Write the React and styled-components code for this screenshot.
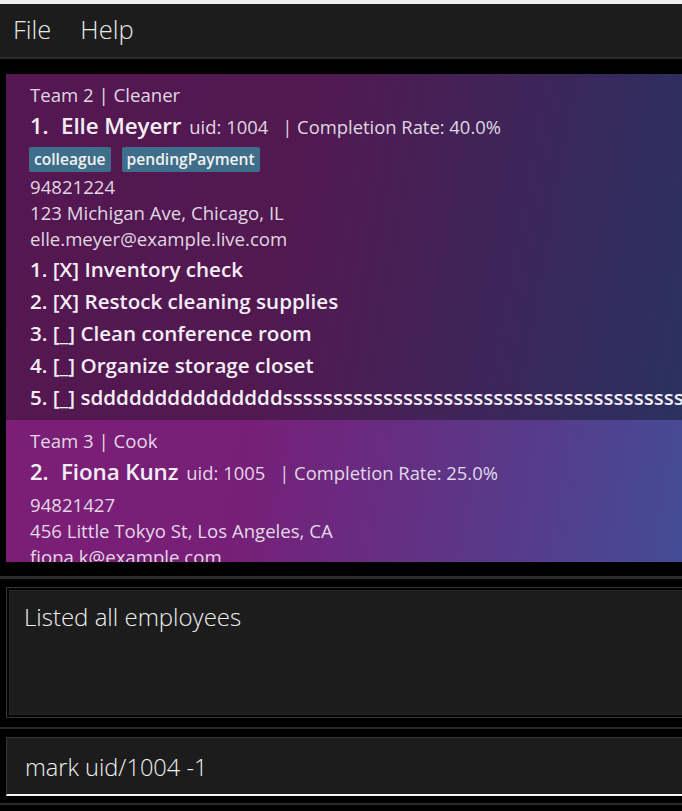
import React from "react";
import styled, { createGlobalStyle } from "styled-components";

const GlobalStyle = createGlobalStyle`
  html, body { margin: 0; padding: 0; background: #000; overflow: hidden; }
  #root { width: 100vw; height: 100vh; }
  * { box-sizing: border-box; }
`;

const Window = styled.div`
  width: 100%;
  height: 811px;
  background: #000;
  display: flex;
  flex-direction: column;
  overflow: hidden;
  font-family: "Open Sans", "Noto Sans", sans-serif;
`;

const TopStrip = styled.div`
  height: 4px;
  background: #f0f0f0;
  flex: none;
`;

const MenuBar = styled.div`
  height: 55px;
  flex: none;
  background: #1c1c1c;
  border-bottom: 2px solid #2b2b2b;
  display: flex;
  align-items: center;
  gap: 29px;
  padding-left: 13px;
  padding-bottom: 3px;
`;

const MenuItem = styled.span`
  font-size: 25.5px;
  font-weight: 300;
  color: #e8e8e8;
`;

const ListPane = styled.div`
  flex: none;
  height: 520px;
  padding: 15px 0 14px 6px;
  border-bottom: 3px solid #2c2c2c;
`;

const ListViewport = styled.div`
  height: 488px;
  overflow: hidden;
`;

const Card = styled.div`
  background: ${(p) => p.$bg};
  padding: 8px 0 7px 24px;
  color: rgba(240, 234, 244, 0.92);
  white-space: nowrap;
  overflow: hidden;
`;

const SmallLine = styled.div`
  font-size: 18.6px;
  line-height: 26px;
  height: 26px;
`;

const NameRow = styled.div`
  margin-top: 2px;
  height: 30px;
  display: flex;
  align-items: baseline;
  line-height: 30px;
`;

const Index = styled.span`
  font-size: 22px;
  font-weight: 600;
  color: #f3eef6;
  width: 31px;
`;

const Name = styled.span`
  font-size: 22.4px;
  font-weight: 600;
  color: #f3eef6;
  letter-spacing: -0.1px;
  margin-right: 8px;
`;

const Meta = styled.span`
  font-size: 18.4px;
  margin-right: ${(p) => p.$gap || 0}px;
`;

const TagRow = styled.div`
  margin-top: 7px;
  margin-bottom: -2px;
  height: 25px;
  display: flex;
  gap: 11px;
  margin-left: -1px;
`;

const Tag = styled.span`
  background: #3f6e8a;
  color: #f2f2f2;
  font-size: 15.6px;
  font-weight: 600;
  line-height: 25px;
  padding: 0 5px;
  border-radius: 2px;
`;

const Details = styled.div`
  margin-top: ${(p) => (p.$afterTags ? 4 : 6)}px;
`;

const Tasks = styled.div`
  margin-top: 1px;
`;

const TaskLine = styled.div`
  font-size: 20.6px;
  font-weight: 600;
  line-height: 32px;
  height: 32px;
  color: #f3eef6;
`;

const ResultSection = styled.div`
  flex: none;
  padding: 8px 0 9px 6px;
  border-bottom: 2px solid #2a2a2a;
`;

const ResultOuter = styled.div`
  border: 1px solid #353535;
  border-right: none;
  padding: 2px 0 2px 2px;
  background: #050505;
`;

const ResultInner = styled.div`
  height: 125px;
  background: #1c1c1c;
  border: 1px solid #262626;
  border-right: none;
  padding: 11px 0 0 14px;
  font-size: 24px;
  font-weight: 300;
  color: #f0f0f0;
  line-height: 30px;
`;

const CommandSection = styled.div`
  flex: none;
  padding: 8px 0 7px 6px;
  border-bottom: 2px solid #2a2a2a;
`;

const CommandBox = styled.div`
  height: 59px;
  background: #1c1c1c;
  border-top: 1px solid #363636;
  border-left: 1px solid #363636;
  border-bottom: 2px solid #f5f5f5;
  padding: 14px 0 0 18px;
  font-size: 23.6px;
  font-weight: 300;
  color: #f0f0f0;
  line-height: 30px;
`;

const employees = [
  {
    team: "Team 2 | Cleaner",
    name: "Elle Meyerr",
    uid: "1004",
    rate: "40.0%",
    tags: ["colleague", "pendingPayment"],
    phone: "94821224",
    address: "123 Michigan Ave, Chicago, IL",
    email: "elle.meyer@example.live.com",
    tasks: [
      "1. [X] Inventory check",
      "2. [X] Restock cleaning supplies",
      "3. [_] Clean conference room",
      "4. [_] Organize storage closet",
      "5. [_] s" + "d".repeat(15) + "s".repeat(60),
    ],
    bg: "linear-gradient(100deg, #551751 0%, #521951 42%, #2a3161 100%)",
  },
  {
    team: "Team 3 | Cook",
    name: "Fiona Kunz",
    uid: "1005",
    rate: "25.0%",
    tags: [],
    phone: "94821427",
    address: "456 Little Tokyo St, Los Angeles, CA",
    email: "fiona.k@example.com",
    tasks: [],
    bg: "linear-gradient(100deg, #7c1e76 0%, #771f78 35%, #434c96 100%)",
  },
];

function EmployeeCard({ e, index }) {
  const hasTags = e.tags.length > 0;
  return (
    <Card $bg={e.bg}>
      <SmallLine>{e.team}</SmallLine>
      <NameRow>
        <Index>{index}.</Index>
        <Name>{e.name}</Name>
        <Meta $gap={14}>uid: {e.uid}</Meta>
        <Meta>| Completion Rate: {e.rate}</Meta>
      </NameRow>
      {hasTags && (
        <TagRow>
          {e.tags.map((t) => (
            <Tag key={t}>{t}</Tag>
          ))}
        </TagRow>
      )}
      <Details $afterTags={hasTags}>
        <SmallLine>{e.phone}</SmallLine>
        <SmallLine>{e.address}</SmallLine>
        <SmallLine>{e.email}</SmallLine>
      </Details>
      {e.tasks.length > 0 && (
        <Tasks>
          {e.tasks.map((t) => (
            <TaskLine key={t}>{t}</TaskLine>
          ))}
        </Tasks>
      )}
    </Card>
  );
}

export default function App() {
  return (
    <>
      <GlobalStyle />
      <Window>
        <TopStrip />
        <MenuBar>
          <MenuItem>File</MenuItem>
          <MenuItem>Help</MenuItem>
        </MenuBar>
        <ListPane>
          <ListViewport>
            {employees.map((e, i) => (
              <EmployeeCard key={e.uid} e={e} index={i + 1} />
            ))}
          </ListViewport>
        </ListPane>
        <ResultSection>
          <ResultOuter>
            <ResultInner>Listed all employees</ResultInner>
          </ResultOuter>
        </ResultSection>
        <CommandSection>
          <CommandBox>mark uid/1004 -1</CommandBox>
        </CommandSection>
      </Window>
    </>
  );
}
